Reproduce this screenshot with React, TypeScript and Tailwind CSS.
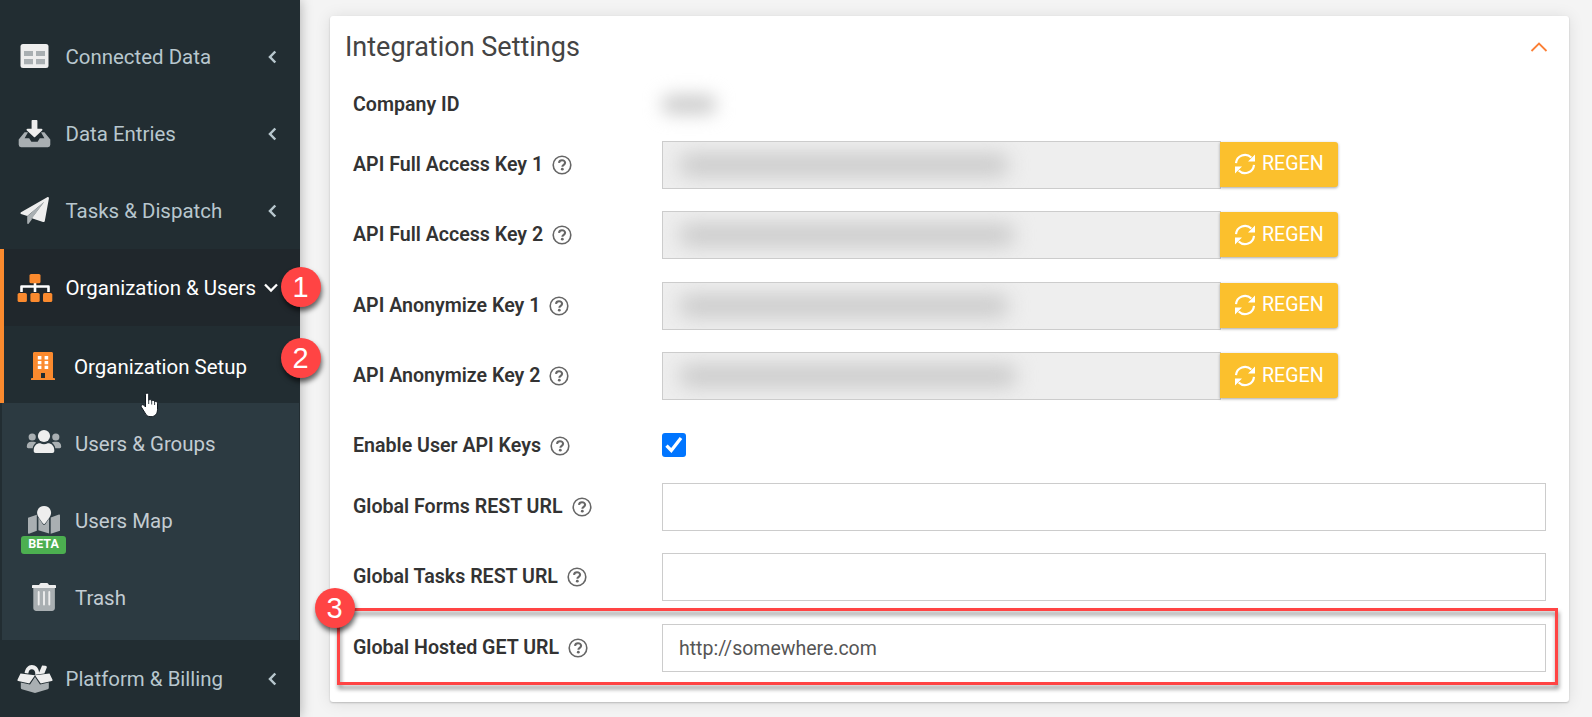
import React from "react";

const LIGHT = "#eeeeee";
const DIM = "#a9afb2";
const ORANGE = "#fb8a2e";

function TableIcon() {
  return (
    <svg width="36" height="30" viewBox="0 0 36 30">
      <rect x="3.5" y="2" width="28" height="24" rx="2.5" fill={LIGHT} />
      <path d="M7 9h9v5H7zM19 9h9v5h-9zM7 17h9v5.2H7zM19 17h9v5.2h-9z" fill={DIM} />
    </svg>
  );
}

function InboxIcon() {
  return (
    <svg width="36" height="30" viewBox="0 0 36 30">
      <path
        d="M1.7 20.6 7.6 13.2H11l-3.4 6h4.6l2.2 3.6h6.2l2.2-3.6h4.6l-3.4-6h3.4l5.9 7.4v5.2a2.4 2.4 0 0 1-2.4 2.4H4.1a2.4 2.4 0 0 1-2.4-2.4z"
        fill={DIM}
      />
      <path d="M14.6 1.8a.8.8 0 0 1 .8-.8h4.2a.8.8 0 0 1 .8.8V9.800h4c1 0 1.400 1 .7 1.700l-7 6.600a.9.9 0 0 1-1.200 0l-7-6.600c-.7-.7-.3-1.700.7-1.700h4z" fill={LIGHT} />
    </svg>
  );
}

function PlaneIcon() {
  return (
    <svg width="36" height="30" viewBox="0 0 36 30">
      <path d="M10.200 20.500 26.500 6.500 14.800 22.300v1.300l-3.200 4.200c-.5.6-1.400.3-1.400-.5z" fill={DIM} />
      <path d="M4 16.300 30.200 1.200c.9-.5 1.900.2 1.700 1.200L27.800 25c-.2.9-1 1.300-1.800 1L14.800 22.200 27 6 10.300 20 4 17.900c-.8-.3-.7-1.200 0-1.600z" fill={LIGHT} />
      <path d="M10.500 20.300 27 6 15 22z" fill={DIM} />
    </svg>
  );
}

function SitemapIcon() {
  return (
    <svg width="36" height="30" viewBox="0 0 36 30">
      <path d="M4.500 19v-5.500h27V19M18 10v9" fill="none" stroke="#fff" strokeWidth="2.600" strokeLinejoin="round" />
      <g fill={ORANGE}>
        <rect x="12.500" y="1" width="11" height="9.300" rx="1.600" />
        <rect x=".6" y="20" width="9.300" height="9" rx="1.600" />
        <rect x="13.400" y="20" width="9.300" height="9" rx="1.600" />
        <rect x="26" y="20" width="9.300" height="9" rx="1.600" />
      </g>
    </svg>
  );
}

function BuildingIcon() {
  return (
    <svg width="36" height="30" viewBox="0 0 36 30">
      <path d="M8 2.500C8 1.600 8.600 1 9.500 1h17c.9 0 1.500.6 1.500 1.500V27h.8c.7 0 1.200.4 1.200 1v1H6v-1c0-.6.500-1 1.200-1H8z" fill={ORANGE} />
      <path d="M12.800 5h3.600v3.400h-3.600zM19.600 5h3.600v3.400h-3.600zM12.800 9.900h3.600v3.400h-3.600zM19.600 9.900h3.600v3.400h-3.600zM12.800 14.700h3.600v3.200h-3.600zM19.600 14.700h3.600v3.200h-3.600z" fill="#fff" />
      <path d="M16 22h4v5h-4z" fill="#222d32" />
    </svg>
  );
}

function UsersIcon() {
  return (
    <svg width="36" height="30" viewBox="0 0 36 30">
      <g fill={DIM}>
        <circle cx="6.200" cy="9" r="3.600" />
        <circle cx="29.800" cy="9" r="3.600" />
        <path d="M.8 18.500c0-2.800 1.800-4.800 4.400-4.800h2.400c1 0 1.900.4 2.600 1-2 1.300-3.200 3.200-3.500 5.500H2.200c-.8 0-1.400-.6-1.400-1.400zM35.200 18.500c0-2.800-1.800-4.800-4.400-4.800h-2.400c-1 0-1.900.4-2.600 1 2 1.300 3.200 3.200 3.500 5.500h4.500c.8 0 1.400-.6 1.400-1.400z" />
      </g>
      <g fill={LIGHT}>
        <circle cx="18" cy="8" r="6.100" />
        <path d="M7.700 22.300c0-4.300 2.700-7 6.500-7 1.200.6 2.500.9 3.800.9s2.600-.3 3.800-.9c3.800 0 6.500 2.700 6.500 7v.7c0 1.200-.8 2-2 2H9.700c-1.200 0-2-.8-2-2z" />
      </g>
    </svg>
  );
}

function MapIcon() {
  return (
    <svg width="36" height="30" viewBox="0 0 36 30">
      <path d="M2 12.800 10.800 9.800v16L3 28.800c-.6.2-1-.1-1-.7zM12.400 12.500l4.500 6.700c.6.900 1.800.9 2.400 0l3.800-5.600v15l-10.700-3.300zM24.700 12.500l8.300-3c.6-.2 1 .1 1 .7v15.500l-9.300 3z" fill={DIM} />
      <path d="M18.100 1c4 0 7 3 7 6.800 0 3.500-3.500 7.400-6.300 11-.4.500-1 .5-1.400 0-2.800-3.600-6.300-7.500-6.300-11C11.100 4 14.100 1 18.100 1z" fill={LIGHT} />
    </svg>
  );
}

function TrashIcon() {
  return (
    <svg width="36" height="30" viewBox="0 0 36 30">
      <path d="M7.300 6h21.600v20c0 1.700-1.200 2.900-2.900 2.900H10.200c-1.700 0-2.900-1.200-2.900-2.900z" fill={DIM} />
      <path d="M12.700 10v12.500M18 10v12.500M23.300 10v12.500" stroke={LIGHT} strokeWidth="1.900" strokeLinecap="round" />
      <path d="M7 3h6l1-1.500c.2-.3.500-.5.900-.5h6.200c.4 0 .7.200.9.500L23 3h6c.6 0 1 .4 1 1v2H6V4c0-.6.400-1 1-1z" fill={LIGHT} />
    </svg>
  );
}

function BoxIcon() {
  return (
    <svg width="36" height="30" viewBox="0 0 36 30">
      <path d="M3.800 18.500 13 20.500 18 13 23 20.500l8.800-2v5.300c0 .7-.4 1.200-1.100 1.400L18 29 4.900 25.200c-.7-.2-1.100-.7-1.100-1.400z" fill={DIM} />
      <path d="M7.600 9C8.300 4 11.300 1 14.800 1c4 0 7 3 7.300 7.500l3-7 3.200.2c1 .1 1.700.8 1.500 1.700l-2.400 6.200-9.400 1.200.3-1.600C18 6.800 16.800 5.300 14.800 5.300s-3.100 1.500-3.500 4.200z" fill={LIGHT} />
      <path d="M3.500 9.400 18 11.300l-5.200 7.500c-.3.500-.8.700-1.300.5L1.200 16.900c-.8-.2-1-.8-.6-1.500zM32.500 9.400 18 11.300l5.200 7.500c.3.500.8.700 1.300.5l10.300-2.400c.8-.2 1-.8.6-1.500z" fill={LIGHT} />
    </svg>
  );
}

function ChevronLeft() {
  return (
    <svg width="14" height="16" viewBox="0 0 14 16" className="mr-[21px]">
      <path d="M10.300 2.500 5 8l5.300 5.500" fill="none" stroke="#b8c7ce" strokeWidth="2.500" />
    </svg>
  );
}

function MenuItem({ icon, label }: { icon: React.ReactNode; label: string }) {
  return (
    <a className="flex h-[77px] items-center pl-[17px] text-[#b8c7ce]">
      {icon}
      <span className="ml-[12.500px] flex-1 pt-px">{label}</span>
      <ChevronLeft />
    </a>
  );
}

function SubItem({ icon, label, beta }: { icon: React.ReactNode; label: string; beta?: boolean }) {
  return (
    <a className="relative flex h-[77px] items-center pt-[2px] pl-6 text-[#c3ccd2]">
      {icon}
      <span className="ml-[13px] pt-[3px]">{label}</span>
      {beta && (
        <span className="absolute top-[56px] left-[19px] flex h-[18px] w-[45px] items-center justify-center rounded-[3px] bg-[#4caf50] pb-[2px] text-[12.500px] font-bold text-white">
          BETA
        </span>
      )}
    </a>
  );
}

function Help() {
  return (
    <svg width="20" height="20" viewBox="0 0 20 20" className="ml-[9px] shrink-0">
      <circle cx="10" cy="10" r="8.800" fill="none" stroke="#666" strokeWidth="1.600" />
      <path d="M7 7.800C7.200 6.200 8.400 5.300 10 5.300c1.800 0 3.100 1 3.100 2.500 0 2-2.700 2-2.700 3.900" fill="none" stroke="#666" strokeWidth="2.100" />
      <circle cx="10.300" cy="14.200" r="1.400" fill="#666" />
    </svg>
  );
}

function Label({ children, help = true }: { children: string; help?: boolean }) {
  return (
    <div className="flex w-[309px] shrink-0 items-center pb-[0.500px] text-[19.600px] font-semibold text-[#333]">
      <span>{children}</span>
      {help && <Help />}
    </div>
  );
}

function RegenButton() {
  return (
    <button className="relative -ml-px flex h-[45px] w-[118px] items-center rounded-r-[3px] bg-[#fbc02d] pb-[0.500px] pl-[14px] text-[19.600px] text-white shadow-[0_1px_3px_rgba(0,0,0,0.35)]">
      <svg width="22" height="22" viewBox="0 0 22 22" className="mr-[6px]">
        <path d="M2 10.200A9 9 0 0 1 17.300 4.500M20 11.800A9 9 0 0 1 4.700 17.500" fill="none" stroke="#fff" strokeWidth="2.200" />
        <path d="M21 1.500v7h-7zM1 20.500v-7h7z" fill="#fff" />
      </svg>
      REGEN
    </button>
  );
}

function KeyRow({ label, masked }: { label: string; masked: string }) {
  return (
    <div className="flex h-12 items-center">
      <Label>{label}</Label>
      <div className="flex h-12 w-[559px] items-center overflow-hidden border border-[#ccc] bg-[#eee] pl-[17px]">
        <span className="h-[22px] shrink-0 rounded-lg bg-[#cacaca] blur-[10px]" style={{ width: masked }} />
      </div>
      <div className="pb-px">
        <RegenButton />
      </div>
    </div>
  );
}

function UrlRow({ label, value = "" }: { label: string; value?: string }) {
  return (
    <div className="flex h-12 items-center">
      <Label>{label}</Label>
      <input
        className="h-12 w-[884px] border border-[#ccc] bg-white px-4 pt-[2px] text-[19.500px] text-[#555] outline-none"
        defaultValue={value}
      />
    </div>
  );
}

function Badge({ n, place }: { n: number; place: string }) {
  return (
    <div
      className={`absolute flex size-10 items-center justify-center rounded-full bg-[#ff4444] pr-px font-['Liberation_Sans',sans-serif] text-[29px] leading-none text-white shadow-[1px_4px_5px_rgba(0,0,0,0.6)] ${place}`}
    >
      {n}
    </div>
  );
}

export default function App() {
  return (
    <div className="relative flex h-[717px] w-[1592px] overflow-hidden bg-[#f4f4f4] font-[Roboto,sans-serif] text-[20.450px]">
      <nav className="relative w-[300px] shrink-0 bg-[#222d32] pt-[18px] shadow-[0_0_12px_rgba(0,0,0,0.3)]">
        <MenuItem icon={<TableIcon />} label="Connected Data" />
        <MenuItem icon={<InboxIcon />} label="Data Entries" />
        <MenuItem icon={<PlaneIcon />} label="Tasks & Dispatch" />
        <div className="border-l-4 border-[#fb8a2e] text-white">
          <a className="flex h-[77px] items-center bg-[#20272c] pl-[13px]">
            <SitemapIcon />
            <span className="ml-[12.500px] pt-px whitespace-nowrap">Organization &amp; Users</span>
            <svg width="16" height="12" viewBox="0 0 16 12" className="ml-[7px] shrink-0">
              <path d="M2 2.500 8 8.500 14 2.500" fill="none" stroke="#fff" strokeWidth="2.300" />
            </svg>
          </a>
          <a className="flex h-[77px] items-center pt-[2px] pl-[21px]">
            <BuildingIcon />
            <span className="ml-[13px] pt-[3px]">Organization Setup</span>
          </a>
        </div>
        <div className="mr-px ml-[2px] h-[237px] bg-[#2c3a41]">
          <SubItem icon={<UsersIcon />} label="Users & Groups" />
          <SubItem icon={<MapIcon />} label="Users Map" beta />
          <SubItem icon={<TrashIcon />} label="Trash" />
        </div>
        <MenuItem icon={<BoxIcon />} label="Platform & Billing" />
      </nav>

      <main className="pt-4 pl-[30px]">
        <section className="h-[686px] w-[1239px] rounded-[3px] bg-white shadow-[0_1px_2px_rgba(0,0,0,0.2),0_1px_16px_rgba(0,0,0,0.1)]">
          <header className="flex h-[62px] items-center justify-between pr-[21px] pl-[15px]">
            <h2 className="text-[27px] text-[#444]">Integration Settings</h2>
            <svg width="18" height="12" viewBox="0 0 18 12">
              <path d="M1.500 10 9 2.500 16.500 10" fill="none" stroke="#fb7f35" strokeWidth="1.800" />
            </svg>
          </header>
          <div className="pl-[23px]">
            <div className="flex h-[52px] items-center">
              <div className="pt-[2px]">
                <Label help={false}>Company ID</Label>
              </div>
              <span className="h-[19px] w-[54px] rounded-lg bg-[#cbcbcb] blur-[9px]" />
            </div>
            <div className="flex flex-col gap-[22.500px] pt-[10.900px]">
              <KeyRow label="API Full Access Key 1" masked="328px" />
              <KeyRow label="API Full Access Key 2" masked="334px" />
              <KeyRow label="API Anonymize Key 1" masked="328px" />
              <KeyRow label="API Anonymize Key 2" masked="336px" />
              <div className="flex h-[37.500px] items-center pt-[7px]">
                <div className="pt-[2px]">
                  <Label>Enable User API Keys</Label>
                </div>
                <span className="flex size-6 items-center justify-center rounded-[3px] bg-[#0075ff]">
                  <svg width="24" height="24" viewBox="0 0 24 24">
                    <path d="M4.500 12.700 9.300 17.500 19 5" fill="none" stroke="#fff" strokeWidth="3.300" />
                  </svg>
                </span>
              </div>
              <UrlRow label="Global Forms REST URL" />
              <UrlRow label="Global Tasks REST URL" />
              <UrlRow label="Global Hosted GET URL" value="http://somewhere.com" />
            </div>
          </div>
        </section>
      </main>

      <div className="absolute top-[608px] left-[337px] h-[77px] w-[1221px] border-[3px] border-[#ff4444] drop-shadow-[1px_4px_2px_rgba(0,0,0,0.45)]" />
      <Badge n={1} place="left-[281px] top-[267px]" />
      <Badge n={2} place="left-[281px] top-[338px]" />
      <Badge n={3} place="left-[315px] top-[588px]" />

      <svg width="20" height="26" viewBox="0 0 20 26" className="absolute top-[392px] left-[140px]">
        <path
          d="M5.500 2.800c0-2.200 3.200-2.200 3.200 0v5.400c.8-1 2.800-.7 3 .6.900-.8 2.700-.4 2.900.9 1.200-.7 2.900 0 2.900 1.500v6.300c0 4-2.200 7.200-6.500 7.200-3.400 0-4.700-1.300-6-3.800l-3.600-5.800c-1-1.800 1.300-3.300 2.600-1.800l1.500 1.700z"
          fill="#fff"
          stroke="#111820"
          strokeWidth="1"
        />
        <path d="M8.700 8v4M11.700 9v3.500M14.600 10v3" stroke="#222d32" strokeWidth=".9" />
      </svg>
    </div>
  );
}
